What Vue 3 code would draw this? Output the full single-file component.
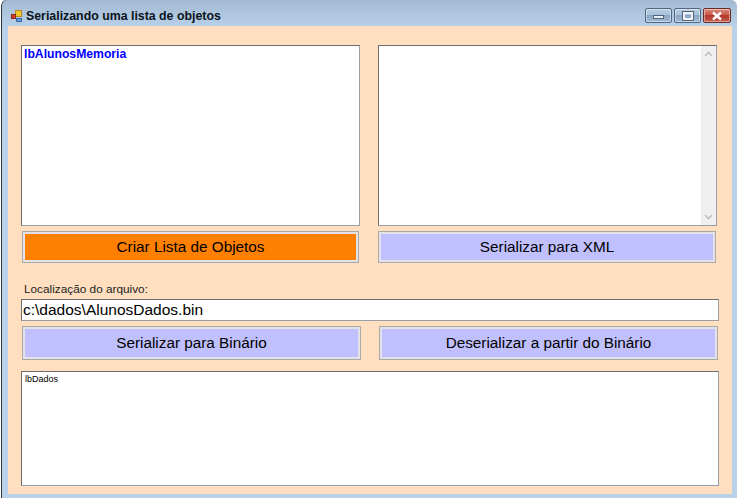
<script setup>
const title = 'Serializando uma lista de objetos'
</script>

<template>
  <div class="window">
    <div class="titlebar">
      <svg class="appicon" width="16" height="16" viewBox="0 0 16 16">
        <rect x="5.5" y="2.5" width="6" height="6" fill="#f2c230" stroke="#b98a20" />
        <rect x="1.5" y="6.5" width="4" height="4" fill="#d0402a" stroke="#8e2a1c" />
        <rect x="6.5" y="10.5" width="5" height="3" fill="#6d97d8" stroke="#3f68a8" />
      </svg>
      <span class="title">{{ title }}</span>
      <div class="controls">
        <div class="ctl min"><span class="min-glyph"></span></div>
        <div class="ctl max"><span class="max-glyph"></span></div>
        <div class="ctl close">
          <svg width="12" height="10" viewBox="0 0 12 10">
            <path d="M2 1.5 L10 8.5 M10 1.5 L2 8.5" stroke="#fff" stroke-width="2.4" fill="none" />
          </svg>
        </div>
      </div>
    </div>
    <div class="client">
      <div class="row top">
        <div class="box list"><span class="memoria">lbAlunosMemoria</span></div>
        <div class="box xml">
          <div class="scroll">
            <svg width="9" height="6" viewBox="0 0 9 6"><path d="M1 5 L4.5 1.5 L8 5" stroke="#c0c0c0" stroke-width="1.6" fill="none" /></svg>
            <svg width="9" height="6" viewBox="0 0 9 6"><path d="M1 1 L4.5 4.5 L8 1" stroke="#c0c0c0" stroke-width="1.6" fill="none" /></svg>
          </div>
        </div>
      </div>
      <div class="row buttons-a">
        <button class="btn orange">Criar Lista de Objetos</button>
        <button class="btn violet">Serializar para XML</button>
      </div>
      <label class="path-label">Localização do arquivo:</label>
      <div class="box path-input">c:\dados\AlunosDados.bin</div>
      <div class="row buttons-b">
        <button class="btn violet">Serializar para Binário</button>
        <button class="btn violet">Deserializar a partir do Binário</button>
      </div>
      <div class="box dados">lbDados</div>
    </div>
  </div>
</template>

<style scoped>
.window {
  width: 737px;
  height: 498px;
  box-sizing: border-box;
  display: flex;
  flex-direction: column;
  padding: 0 5px 4px 7px;
  background: linear-gradient(180deg, #a3bad2 0, #b9d1ea 28px, #b9d1ea 100%);
  border-left: 1px solid #fff;
  box-shadow: inset 1px 0 0 #2c343c;
  border-top-left-radius: 6px;
  border-top-right-radius: 6px;
  font-family: "Liberation Sans", Arial, sans-serif;
  color: #000;
}
.titlebar {
  height: 26px;
  flex: none;
  display: flex;
  align-items: center;
  box-sizing: border-box;
  padding: 5px 0 0 2px;
}
.appicon { flex: none; }
.title {
  font-size: 12.35px;
  font-weight: bold;
  color: #0c1420;
}
.controls {
  margin-left: auto;
  display: flex;
  gap: 2px;
  margin-top: 0;
  margin-right: 1px;
}
.ctl {
  height: 15px;
  box-sizing: border-box;
  border: 1px solid #4f6780;
  border-radius: 2px;
  display: flex;
  align-items: center;
  justify-content: center;
  box-shadow: inset 0 0 0 1px rgba(255,255,255,0.45);
}
.min, .max {
  width: 27px;
  background: linear-gradient(180deg, #b6cde2 0, #a9c1d9 45%, #8aa6c2 50%, #9fbad4 100%);
}
.close {
  width: 28px;
  background: linear-gradient(180deg, #d98a7d 0, #c9584a 45%, #b03a2c 50%, #c65a4a 100%);
  border-color: #6c2a24;
}
.min-glyph {
  width: 11px;
  height: 4px;
  margin-top: 3px;
  background: #e8eef5;
  border: 1px solid #50657c;
  box-sizing: border-box;
}
.max-glyph {
  width: 10px;
  height: 8px;
  background: transparent;
  border: 2px solid #f0f4f8;
  outline: 1px solid #50657c;
  box-sizing: border-box;
}
.client {
  flex: 1;
  background: #ffdfbf;
  box-sizing: border-box;
  padding: 19px 13px 8px 13px;
  display: flex;
  flex-direction: column;
}
.row { display: flex; }
.box {
  background: #fff;
  box-sizing: border-box;
  border: 1px solid #9a9ea6;
  border-top-color: #6d6d6d;
  border-left-color: #6d6d6d;
}
.top { gap: 18px; height: 181px; margin-right: 2px; }
.list { width: 339px; padding: 1px 2px; }
.memoria {
  color: #0000ff;
  font-size: 12.2px;
  font-weight: bold;
  line-height: 14px;
  display: block;
}
.xml { width: 339px; display: flex; justify-content: flex-end; }
.scroll {
  width: 15px;
  background: #f0f0f0;
  display: flex;
  flex-direction: column;
  justify-content: space-between;
  align-items: center;
  padding: 5px 0;
}
.btn {
  box-sizing: border-box;
  font-family: inherit;
  font-size: 15.3px;
  color: #000;
  border: 3px solid #e4e2e6;
  outline: 1px solid #a9a9a9;
  outline-offset: -1px;
  padding: 0;
}
.orange { background: #ff8000; }
.violet { background: #c0c0ff; }
.buttons-a { margin: 5px 2px 0 1px; height: 32px; gap: 19px; }
.buttons-a .btn:first-child { width: 337px; }
.buttons-a .btn:last-child { width: 338px; }
.path-label {
  margin: 19px 0 0 3px;
  font-size: 11.8px;
  line-height: 14px;
  color: #222;
}
.path-input {
  margin-top: 3px;
  height: 22px;
  font-size: 15.5px;
  line-height: 20px;
  padding-left: 1px;
}
.buttons-b { margin: 5px 1px 0 1px; height: 34px; gap: 18px; }
.buttons-b .btn { width: 339px; }
.dados {
  margin-top: 11px;
  flex: 1;
  font-size: 9px;
  line-height: 13px;
  padding: 1px 3px;
}
</style>

<style>
html, body { margin: 0; overflow: hidden; background: #fff; }
</style>
